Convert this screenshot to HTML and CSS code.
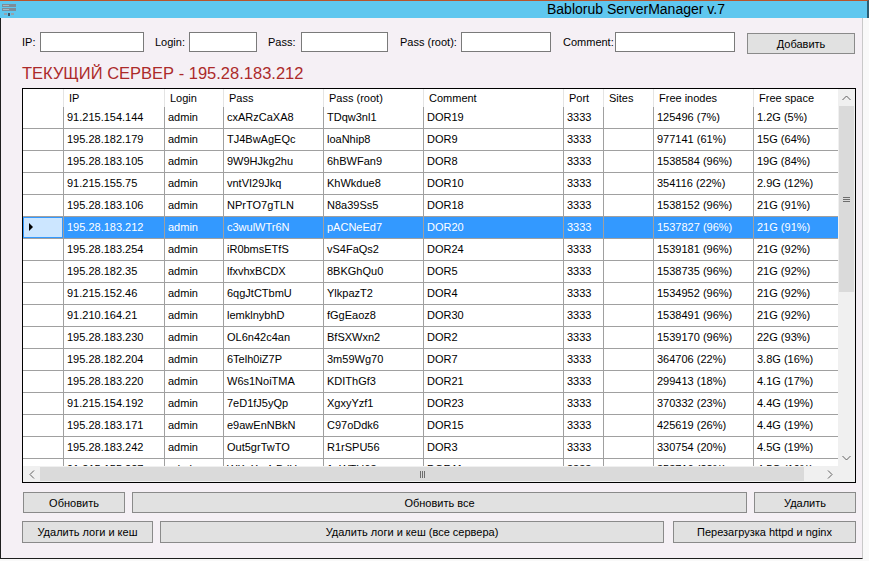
FILE: index.html
```html
<!DOCTYPE html>
<html lang="ru">
<head>
    <meta charset="UTF-8">
    <title>Bablorub ServerManager v.7</title>
    <link rel="stylesheet" href="styles.css">
</head>
<body>
<div class="window">
    <header class="titlebar">
        <svg class="app-icon" width="16" height="14" viewBox="0 0 16 14">
            <rect x="1" y="1" width="14" height="3" fill="#7d8d9a"/>
            <rect x="1" y="5" width="14" height="3" fill="#7d8d9a"/>
            <rect x="2" y="2" width="6" height="1" fill="#a9b6c0"/>
            <rect x="2" y="6" width="6" height="1" fill="#a9b6c0"/>
            <rect x="3" y="10" width="3" height="2" fill="#93a3af"/>
            <rect x="7" y="10" width="2" height="3" fill="#3c566a"/>
            <rect x="10" y="10" width="3" height="2" fill="#93a3af"/>
        </svg>
        <span class="title">Bablorub ServerManager v.7</span>
    </header>

    <div class="client">
        <div class="toolbar">
            <label class="lbl lbl-ip">IP:</label>
            <input class="field field-ip" type="text">
            <label class="lbl lbl-login">Login:</label>
            <input class="field field-login" type="text">
            <label class="lbl lbl-pass">Pass:</label>
            <input class="field field-pass" type="text">
            <label class="lbl lbl-root">Pass (root):</label>
            <input class="field field-root" type="text">
            <label class="lbl lbl-comment">Comment:</label>
            <input class="field field-comment" type="text">
            <button class="btn btn-add">Добавить</button>
        </div>

        <h2 class="current">ТЕКУЩИЙ СЕРВЕР - 195.28.183.212</h2>

        <div class="grid">
            <div class="cells">
                <div class="hdr">
                    <div></div><div>IP</div><div>Login</div><div>Pass</div><div>Pass (root)</div><div>Comment</div><div>Port</div><div>Sites</div><div>Free inodes</div><div>Free space</div>
                </div>
                <div class="row"><div></div><div>91.215.154.144</div><div>admin</div><div>cxARzCaXA8</div><div>TDqw3nl1</div><div>DOR19</div><div>3333</div><div></div><div>125496 (7%)</div><div>1.2G (5%)</div></div>
                <div class="row"><div></div><div>195.28.182.179</div><div>admin</div><div>TJ4BwAgEQc</div><div>loaNhip8</div><div>DOR9</div><div>3333</div><div></div><div>977141 (61%)</div><div>15G (64%)</div></div>
                <div class="row"><div></div><div>195.28.183.105</div><div>admin</div><div>9W9HJkg2hu</div><div>6hBWFan9</div><div>DOR8</div><div>3333</div><div></div><div>1538584 (96%)</div><div>19G (84%)</div></div>
                <div class="row"><div></div><div>91.215.155.75</div><div>admin</div><div>vntVI29Jkq</div><div>KhWkdue8</div><div>DOR10</div><div>3333</div><div></div><div>354116 (22%)</div><div>2.9G (12%)</div></div>
                <div class="row"><div></div><div>195.28.183.106</div><div>admin</div><div>NPrTO7gTLN</div><div>N8a39Ss5</div><div>DOR18</div><div>3333</div><div></div><div>1538152 (96%)</div><div>21G (91%)</div></div>
                <div class="row sel"><div></div><div>195.28.183.212</div><div>admin</div><div>c3wulWTr6N</div><div>pACNeEd7</div><div>DOR20</div><div>3333</div><div></div><div>1537827 (96%)</div><div>21G (91%)</div></div>
                <div class="row"><div></div><div>195.28.183.254</div><div>admin</div><div>iR0bmsETfS</div><div>vS4FaQs2</div><div>DOR24</div><div>3333</div><div></div><div>1539181 (96%)</div><div>21G (92%)</div></div>
                <div class="row"><div></div><div>195.28.182.35</div><div>admin</div><div>lfxvhxBCDX</div><div>8BKGhQu0</div><div>DOR5</div><div>3333</div><div></div><div>1538735 (96%)</div><div>21G (92%)</div></div>
                <div class="row"><div></div><div>91.215.152.46</div><div>admin</div><div>6qgJtCTbmU</div><div>YlkpazT2</div><div>DOR4</div><div>3333</div><div></div><div>1534952 (96%)</div><div>21G (92%)</div></div>
                <div class="row"><div></div><div>91.210.164.21</div><div>admin</div><div>lemklnybhD</div><div>fGgEaoz8</div><div>DOR30</div><div>3333</div><div></div><div>1538491 (96%)</div><div>21G (92%)</div></div>
                <div class="row"><div></div><div>195.28.183.230</div><div>admin</div><div>OL6n42c4an</div><div>BfSXWxn2</div><div>DOR2</div><div>3333</div><div></div><div>1539170 (96%)</div><div>22G (93%)</div></div>
                <div class="row"><div></div><div>195.28.182.204</div><div>admin</div><div>6Telh0iZ7P</div><div>3m59Wg70</div><div>DOR7</div><div>3333</div><div></div><div>364706 (22%)</div><div>3.8G (16%)</div></div>
                <div class="row"><div></div><div>195.28.183.220</div><div>admin</div><div>W6s1NoiTMA</div><div>KDIThGf3</div><div>DOR21</div><div>3333</div><div></div><div>299413 (18%)</div><div>4.1G (17%)</div></div>
                <div class="row"><div></div><div>91.215.154.192</div><div>admin</div><div>7eD1fJ5yQp</div><div>XgxyYzf1</div><div>DOR23</div><div>3333</div><div></div><div>370332 (23%)</div><div>4.4G (19%)</div></div>
                <div class="row"><div></div><div>195.28.183.171</div><div>admin</div><div>e9awEnNBkN</div><div>C97oDdk6</div><div>DOR15</div><div>3333</div><div></div><div>425619 (26%)</div><div>4.4G (19%)</div></div>
                <div class="row"><div></div><div>195.28.183.242</div><div>admin</div><div>Out5grTwTO</div><div>R1rSPU56</div><div>DOR3</div><div>3333</div><div></div><div>330754 (20%)</div><div>4.5G (19%)</div></div>
                <div class="row"><div></div><div>91.215.155.227</div><div>admin</div><div>WKaXw4rBdH</div><div>1nWTU63</div><div>DOR11</div><div>3333</div><div></div><div>353716 (22%)</div><div>4.5G (19%)</div></div>
            </div>

            <div class="vbar">
                <div class="arrow">
                    <svg width="9" height="6" viewBox="0 0 9 6"><polyline points="0.5,5 4.5,1 8.5,5" fill="none" stroke="#606060" stroke-width="1"/></svg>
                </div>
                <div class="thumb-v">
                    <svg width="7" height="5" viewBox="0 0 7 5"><path d="M0 0.5H7M0 2.5H7M0 4.5H7" stroke="#6d6d6d" stroke-width="1"/></svg>
                </div>
                <div class="track"></div>
                <div class="arrow">
                    <svg width="9" height="6" viewBox="0 0 9 6"><polyline points="0.5,1 4.5,5 8.5,1" fill="none" stroke="#606060" stroke-width="1"/></svg>
                </div>
            </div>

            <div class="hbar">
                <div class="arrow">
                    <svg width="6" height="9" viewBox="0 0 6 9"><polyline points="5,0.5 1,4.5 5,8.5" fill="none" stroke="#606060" stroke-width="1"/></svg>
                </div>
                <div class="thumb-h">
                    <svg width="5" height="7" viewBox="0 0 5 7"><path d="M0.5 0V7M2.5 0V7M4.5 0V7" stroke="#6d6d6d" stroke-width="1"/></svg>
                </div>
                <div class="track"></div>
                <div class="arrow">
                    <svg width="6" height="9" viewBox="0 0 6 9"><polyline points="1,0.5 5,4.5 1,8.5" fill="none" stroke="#606060" stroke-width="1"/></svg>
                </div>
            </div>

            <div class="corner"></div>
        </div>

        <div class="actions actions-top">
            <button class="btn btn-refresh">Обновить</button>
            <button class="btn btn-refresh-all">Обновить все</button>
            <button class="btn btn-delete">Удалить</button>
        </div>
        <div class="actions actions-bottom">
            <button class="btn btn-logs">Удалить логи и кеш</button>
            <button class="btn btn-logs-all">Удалить логи и кеш (все сервера)</button>
            <button class="btn btn-restart">Перезагрузка httpd и nginx</button>
        </div>
    </div>
</div>
</body>
</html>
```

FILE: styles.css
```css
body {
    margin: 0;
    background: #f9f9f9;
    font-family: 'Liberation Sans', Arial, sans-serif;
    font-size: 11px;
    color: #000;
}

.window {
    width: 869px;
    height: 561px;
    overflow: hidden;
}

/* title bar */
.titlebar {
    display: flex;
    align-items: center;
    height: 17px;
    background: #5fc7ef;
    border-top: 1px solid #b9542c;
    border-right: 2px solid #2d5d72;
}

.app-icon {
    flex: none;
    margin-left: 1px;
}

.title {
    margin-left: 530px;
    font-size: 14px;
    line-height: 17px;
    color: #000;
}

/* client area */
.client {
    width: 863px;
    height: 541px;
    box-sizing: border-box;
    padding: 14px 0 0 21px;
    background: #f5f0f5;
    border-left: 1px solid #1e1e1e;
    border-right: 1px solid #c9c9c9;
    border-bottom: 1px solid #1e1e1e;
}

.toolbar {
    display: flex;
    align-items: flex-start;
    height: 21px;
}

.lbl {
    flex: none;
    line-height: 20px;
    white-space: nowrap;
}

.lbl-ip { width: 18px; }
.lbl-login { width: 34px; margin-left: 11px; }
.lbl-pass { width: 33px; margin-left: 11px; }
.lbl-root { width: 61px; margin-left: 12px; }
.lbl-comment { width: 52px; margin-left: 12px; }

.field {
    flex: none;
    height: 20px;
    box-sizing: border-box;
    margin: 0;
    padding: 0 2px;
    border: 1px solid #7a7a7a;
    background: #fff;
    font: inherit;
}

.field-ip { width: 104px; }
.field-login { width: 68px; }
.field-pass { width: 87px; }
.field-root { width: 90px; }
.field-comment { width: 120px; }

.btn {
    flex: none;
    height: 21px;
    box-sizing: border-box;
    margin: 0;
    padding: 0;
    background: #e1e1e1;
    border: 1px solid #8a8a8a;
    font-family: 'Liberation Sans', Arial, sans-serif;
    font-size: 11px;
    color: #000;
}

.btn-add {
    width: 108px;
    margin: 1px 0 0 12px;
}

.current {
    margin: 11px 0 0;
    font-size: 16.5px;
    font-weight: normal;
    line-height: 19px;
    color: #ac2a2a;
}

/* data grid */
.grid {
    margin-top: 5px;
    width: 834px;
    height: 395px;
    box-sizing: border-box;
    border: 1px solid #000;
    display: grid;
    grid-template-columns: 815px 17px;
    grid-template-rows: 377px 16px;
    background: #fff;
}

.cells {
    overflow: hidden;
    background: #fff;
}

.hdr,
.row {
    display: grid;
    grid-template-columns: 41px 101px 59px 100px 100px 140px 40px 50px 100px 100px;
}

.hdr > div {
    height: 18px;
    line-height: 18px;
    padding-left: 5px;
    box-sizing: border-box;
    border-right: 1px solid #e4e4e4;
    white-space: nowrap;
    overflow: hidden;
}

.row > div {
    height: 22px;
    line-height: 20px;
    padding-left: 3px;
    box-sizing: border-box;
    border-right: 1px solid #a0a0a0;
    border-bottom: 1px solid #a0a0a0;
    white-space: nowrap;
    overflow: hidden;
}

.row > div:first-child {
    padding: 0;
}

.row.sel > div {
    background: #3399ff;
    color: #fff;
}

.row.sel > div:first-child {
    position: relative;
    background: #cce6ff;
    box-shadow: inset 0 0 0 1px #3399ff;
}

.row.sel > div:first-child::before {
    content: "";
    position: absolute;
    left: 6px;
    top: 6px;
    border-left: 4px solid #000;
    border-top: 4.5px solid transparent;
    border-bottom: 4.5px solid transparent;
}

/* scrollbars */
.vbar {
    display: flex;
    flex-direction: column;
    background: #f0f0f0;
}

.hbar {
    display: flex;
    background: #f0f0f0;
}

.arrow {
    flex: none;
    width: 17px;
    height: 17px;
    display: flex;
    align-items: center;
    justify-content: center;
}

.hbar .arrow {
    height: 16px;
}

.thumb-v {
    flex: none;
    height: 186px;
    margin: 0 1px;
    background: #dadada;
    display: flex;
    align-items: center;
    justify-content: center;
}

.thumb-h {
    flex: none;
    width: 764px;
    margin: 1px 0;
    background: #dadada;
    display: flex;
    align-items: center;
    justify-content: center;
}

.track {
    flex: 1;
}

.corner {
    background: #f0f0f0;
}

/* bottom buttons */
.actions {
    display: flex;
}

.actions-top {
    margin-top: 9px;
}

.actions-bottom {
    margin-top: 8px;
}

.btn-refresh { width: 102px; margin-left: 1px; }
.btn-refresh-all { width: 615px; margin-left: 7px; }
.btn-delete { width: 102px; margin-left: 7px; }

.btn-logs { width: 131px; height: 22px; }
.btn-logs-all { width: 504px; height: 22px; margin-left: 7px; }
.btn-restart { width: 183px; height: 22px; margin-left: 9px; }
```
